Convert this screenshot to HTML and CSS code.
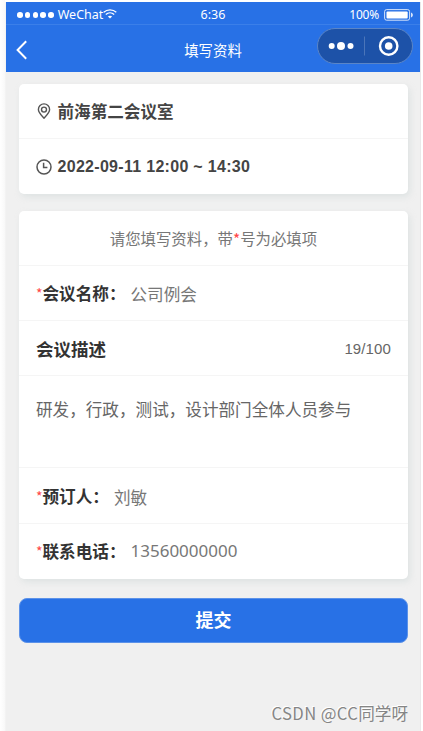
FILE: index.html
```html
<!DOCTYPE html>
<html lang="zh-CN">
<head>
    <meta charset="utf-8">
    <title>填写资料</title>
    <link rel="stylesheet" href="styles.css">
</head>
<body>
    <div class="phone">
        <div class="status">
            <div class="signal"><i></i><i></i><i></i><i></i><i></i></div>
            <span class="carrier">WeChat</span>
            <svg class="wifi" width="14" height="10" viewBox="0 0 14 10" fill="none" stroke="#fff" stroke-width="1.3">
                <path d="M0.7 3.3C4.2 0 9.8 0 13.3 3.3"/>
                <path d="M2.8 5.5C5.2 3.3 8.8 3.3 11.2 5.5"/>
                <path d="M4.9 7.6C6.1 6.6 7.9 6.6 9.1 7.6L7 9.6Z" fill="#fff" stroke="none"/>
            </svg>
            <span class="clock">6:36</span>
            <span class="percent">100%</span>
            <svg class="battery" width="30" height="12" viewBox="0 0 30 12">
                <rect x="0.6" y="0.6" width="25" height="10.6" rx="2" fill="none" stroke="#fff" stroke-opacity=".8" stroke-width="1"/>
                <rect x="2.5" y="2.4" width="21.2" height="7" rx="1" fill="#fff"/>
                <path d="M27.2 3.4C29.2 4.2 29.2 7.6 27.2 8.4Z" fill="#fff"/>
            </svg>
        </div>
        <div class="nav">
            <svg class="back" width="12" height="20" viewBox="0 0 12 20" fill="none" stroke="#fff" stroke-width="2">
                <path d="M10.2 1.2L1.6 10L10.2 18.8"/>
            </svg>
            <span class="title">填写资料</span>
            <div class="capsule">
                <svg width="94" height="34" viewBox="0 0 94 34">
                    <circle cx="13.7" cy="17" r="3" fill="#fff"/>
                    <circle cx="23" cy="17" r="4" fill="#fff"/>
                    <circle cx="32.5" cy="17" r="3" fill="#fff"/>
                    <path d="M46.5 7.5V26.5" stroke="#4b75b9" stroke-width="1"/>
                    <circle cx="70.7" cy="17" r="8.7" fill="none" stroke="#fff" stroke-width="2.4"/>
                    <circle cx="70.7" cy="17" r="3.8" fill="#fff"/>
                </svg>
            </div>
        </div>

        <div class="main">
            <div class="card">
                <div class="row room">
                    <svg class="icon" width="16" height="16" viewBox="0 0 16 16" fill="none" stroke="#555" stroke-width="1.4">
                        <path d="M8 15.2C5.2 12.2 2.4 9.6 2.4 6.5A5.6 5.6 0 0 1 13.6 6.5C13.6 9.6 10.8 12.2 8 15.2Z"/>
                        <circle cx="8" cy="6.6" r="2.5"/>
                    </svg>
                    <span>前海第二会议室</span>
                </div>
                <div class="row time">
                    <svg class="icon" width="16" height="16" viewBox="0 0 16 16" fill="none" stroke="#555" stroke-width="1.5">
                        <circle cx="8" cy="8" r="7"/>
                        <path d="M7.6 3.8V8.6H11.4"/>
                    </svg>
                    <span>2022-09-11 12:00 ~ 14:30</span>
                </div>
            </div>

            <div class="card form">
                <div class="row tip"><span>请您填写资料，带<b>*</b>号为必填项</span></div>
                <div class="row">
                    <label><b>*</b>会议名称：</label>
                    <span class="value">公司例会</span>
                </div>
                <div class="row desc">
                    <label>会议描述</label>
                    <span class="count">19/100</span>
                </div>
                <div class="row content">研发，行政，测试，设计部门全体人员参与</div>
                <div class="row">
                    <label><b>*</b>预订人：</label>
                    <span class="value">刘敏</span>
                </div>
                <div class="row">
                    <label><b>*</b>联系电话：</label>
                    <span class="value phone-no">13560000000</span>
                </div>
            </div>

            <button class="submit" type="button">提交</button>
        </div>
        <div class="mark"><span>CSDN @CC</span>同学呀</div>
    </div>
</body>
</html>
```

FILE: styles.css
```css
* {
    box-sizing: border-box;
}
body {
    margin: 0;
    background: linear-gradient(90deg, #fff 0, #f8f8f8 5px, #fff 5px);
    font-family: "Noto Sans", "Noto Sans CJK SC", sans-serif;
    overflow: hidden;
}
.phone {
    position: relative;
    width: 416px;
    height: 729px;
    margin: 2px 0 0 5px;
    background: #f0f0f0;
    border-left: 1px solid #f3f3f3;
    border-right: 1px solid #e9e9e9;
}

/* 状态栏 */
.status {
    position: relative;
    display: flex;
    align-items: center;
    height: 23px;
    padding: 2px 6px 0 11px;
    background: #2871e6;
    border-bottom: 1px solid #3b7fe9;
    color: #fff;
    font-size: 12.5px;
}
.signal {
    display: flex;
    gap: 2.2px;
    padding-top: 2px;
}
.signal i {
    width: 5.6px;
    height: 5.6px;
    border-radius: 50%;
    background: #fff;
}
.carrier {
    margin-left: 4px;
}
.clock {
    position: absolute;
    left: 0;
    right: 0;
    text-align: center;
}
.percent {
    margin: 0 5px 0 auto;
    font-size: 12px;
    letter-spacing: -.2px;
}
.battery {
    margin-top: 2px;
}

/* 导航 */
.nav {
    position: relative;
    display: flex;
    align-items: center;
    justify-content: space-between;
    height: 47px;
    padding: 0 7px 0 10px;
    background: #2871e6;
    color: #fff;
}
.back {
    margin-top: 3px;
}
.title {
    position: absolute;
    left: 0;
    right: 0;
    top: 14px;
    text-align: center;
    font: 14.4px/22px "Noto Sans CJK SC", sans-serif;
}
.capsule {
    width: 96px;
    height: 36px;
    margin-bottom: 5px;
    border: 1px solid #5a85c7;
    border-radius: 18px;
    background: #1d52a8;
}
.capsule svg {
    display: block;
}

.main {
    padding: 11.5px 12.5px 0 13.4px;
}
.card {
    margin-bottom: 17px;
    border-radius: 5px;
    background: #fff;
    box-shadow: 2px 3px 6px rgba(190, 203, 203, .35);
}
.row {
    display: flex;
    align-items: center;
    height: 55.2px;
    padding: 0 16.6px;
    border-bottom: 1px solid #f5f5f5;
    font: 16.6px/24px "Noto Sans CJK SC", sans-serif;
    color: #666;
}
.row:last-child {
    border-bottom: none;
}
.icon {
    margin-right: 5.5px;
}
.room, .time {
    color: #444;
    font-weight: bold;
}
.time {
    padding-top: 2px;
    font-family: "Liberation Sans", Arial, sans-serif;
    font-size: 16px;
    letter-spacing: .3px;
}
.tip {
    justify-content: center;
    color: #777;
    font-size: 15.4px;
}
.row b {
    color: #ff4646;
    font-weight: normal;
}
label {
    color: #333;
    font-weight: bold;
}
label b {
    font-size: 14px;
    vertical-align: 1px;
}
.value {
    margin: 2px 0 0 5px;
    color: #777;
}
.phone-no {
    margin-top: 0;
    font-family: "Noto Sans", sans-serif;
    font-size: 17px;
}
.desc {
    justify-content: space-between;
    padding-top: 1px;
    font-size: 17.5px;
}
.count {
    font-family: "Liberation Sans", Arial, sans-serif;
    font-size: 15px;
    letter-spacing: .1px;
}
.content {
    align-items: flex-start;
    height: 92px;
    padding-top: 21px;
}
.form {
    margin-bottom: 19px;
}
.submit {
    display: block;
    width: 100%;
    height: 45px;
    padding: 0 0 4px;
    border: 1px solid #5c92e9;
    border-radius: 8px;
    background: #2871e6;
    color: #fff;
    font: bold 18px/40px "Noto Sans CJK SC", sans-serif;
}
.mark {
    position: absolute;
    right: 12px;
    bottom: 6px;
    color: #858585;
    font: 16.6px/24px "Noto Sans CJK SC", sans-serif;
    text-shadow: -1px -1px 0 #fff;
}
.mark span {
    letter-spacing: .4px;
}
```
